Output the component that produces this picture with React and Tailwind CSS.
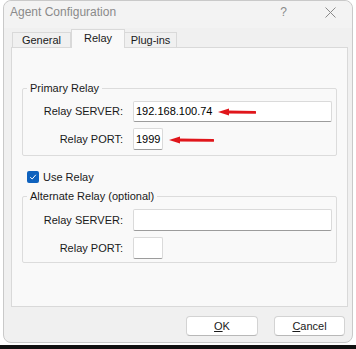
import React from "react";

const font = { fontFamily: '"Liberation Sans", Arial, sans-serif' };

function Arrow({ className, len }) {
  return (
    <svg className={className} width={len} height="8" viewBox={`0 0 ${len} 8`}>
      <polygon points={`0,4 11,0.5 11,7.5`} fill="#e0161b" />
      <line x1="9" y1="4" x2={len - 1} y2="4.3" stroke="#e0161b" strokeWidth="2.8" strokeLinecap="round" />
    </svg>
  );
}

function Row({ label, value, wide, h, arrow }) {
  return (
    <div className={`relative flex items-center ${h}`}>
      <div className="w-[100px] text-right text-[11px] text-[#1a1a1a] leading-none">{label}</div>
      <div
        className={`ml-[10px] ${h} ${wide ? "w-[199px]" : "w-[30px]"} bg-white border border-[#dadada] border-b-[#9c9c9c] rounded-[2px] flex items-center pl-[2px] text-[11px] text-black`}
      >
        {value}
      </div>
      {arrow}
    </div>
  );
}

function Group({ title, children, className }) {
  return (
    <fieldset className={`mx-[10px] border border-[#dcdcdc] rounded-[2px] ${className}`}>
      <legend className="ml-[4px] px-[3px] text-[11px] leading-[13px] text-[#1a1a1a]">{title}</legend>
      {children}
    </fieldset>
  );
}

export default function App() {
  return (
    <div className="w-[356px] h-[349px] bg-white relative overflow-hidden" style={font}>
      <div className="ml-[3px] w-[350px] h-[343px] rounded-[8px] border border-[#c9c9c9] bg-[#f0f0f0] flex flex-col">
        {/* Title bar */}
        <div className="h-[27px] flex items-start pt-[4px] rounded-t-[8px] bg-[#f3f3f3]">
          <div className="ml-[6px] text-[12px] leading-[15px] text-[#8a8a8a]">Agent Configuration</div>
          <div className="ml-auto mr-[38px] text-[12px] leading-[15px] text-[#8a8a8a]">?</div>
          <svg className="mr-[16px] mt-[2px]" width="11" height="11" viewBox="0 0 11 11">
            <path d="M0.5 0.5 L10.5 10.5 M10.5 0.5 L0.5 10.5" stroke="#8a8a8a" strokeWidth="1" />
          </svg>
        </div>
        {/* Tabs */}
        <div className="h-[19px] flex items-end pl-[8px] relative z-10">
          <div className="h-[15px] w-[59px] border border-b-0 border-[#d9d9d9] bg-[#f0f0f0] flex items-center justify-center text-[11px] text-[#1a1a1a]">
            General
          </div>
          <div className="h-[19px] w-[54px] -mb-px border border-b-0 border-[#d9d9d9] bg-[#f9f9f9] flex items-center justify-center text-[11px] text-[#1a1a1a] pb-[2px]">
            Relay
          </div>
          <div className="h-[15px] w-[52px] border border-b-0 border-l-0 border-[#d9d9d9] bg-[#f0f0f0] flex items-center justify-center text-[11px] text-[#1a1a1a]">
            Plug-ins
          </div>
        </div>
        {/* Panel */}
        <div className="ml-[7px] w-[337px] h-[260px] border border-[#d9d9d9] bg-[#f9f9f9] flex flex-col">
          <Group title="Primary Relay" className="mt-[34px] pt-[6px] pb-[5px] flex flex-col gap-[6px]">
            <Row
              label="Relay SERVER:"
              value="192.168.100.74"
              wide
              h="h-[21px]"
              arrow={<Arrow className="absolute left-[195px] top-[7px]" len={38} />}
            />
            <Row
              label="Relay PORT:"
              value="1999"
              h="h-[22px]"
              arrow={<Arrow className="absolute left-[146px] top-[8px]" len={45} />}
            />
          </Group>
          <div className="mt-[15px] ml-[15px] flex items-center h-[12px]">
            <div className="w-[12px] h-[12px] rounded-[2px] bg-[#0f62be] flex items-center justify-center">
              <svg width="8" height="8" viewBox="0 0 8 8">
                <path d="M1.2 4.2 L3.2 6 L6.8 1.8" stroke="white" strokeWidth="1" fill="none" />
              </svg>
            </div>
            <div className="ml-[4px] text-[11px] text-[#1a1a1a]">Use Relay</div>
          </div>
          <Group title="Alternate Relay (optional)" className="mt-[7px] pt-[6px] pb-[3px] flex flex-col gap-[6px]">
            <Row label="Relay SERVER:" value="" wide h="h-[22px]" />
            <Row label="Relay PORT:" value="" h="h-[22px]" />
          </Group>
        </div>
        {/* Buttons */}
        <div className="mt-[9px] flex justify-end gap-[16px] mr-[7px]">
          <div className="w-[72px] h-[20px] bg-white border border-[#d3d3d3] border-b-[#b8b8b8] rounded-[4px] flex items-center justify-center text-[11px] text-[#1a1a1a]">
            <span><span className="underline">O</span>K</span>
          </div>
          <div className="w-[71px] h-[20px] bg-white border border-[#d3d3d3] border-b-[#b8b8b8] rounded-[4px] flex items-center justify-center text-[11px] text-[#1a1a1a]">
            <span><span className="underline">C</span>ancel</span>
          </div>
        </div>
      </div>
      <div className="mt-[2px] h-[4px] bg-[#111]" />
    </div>
  );
}
